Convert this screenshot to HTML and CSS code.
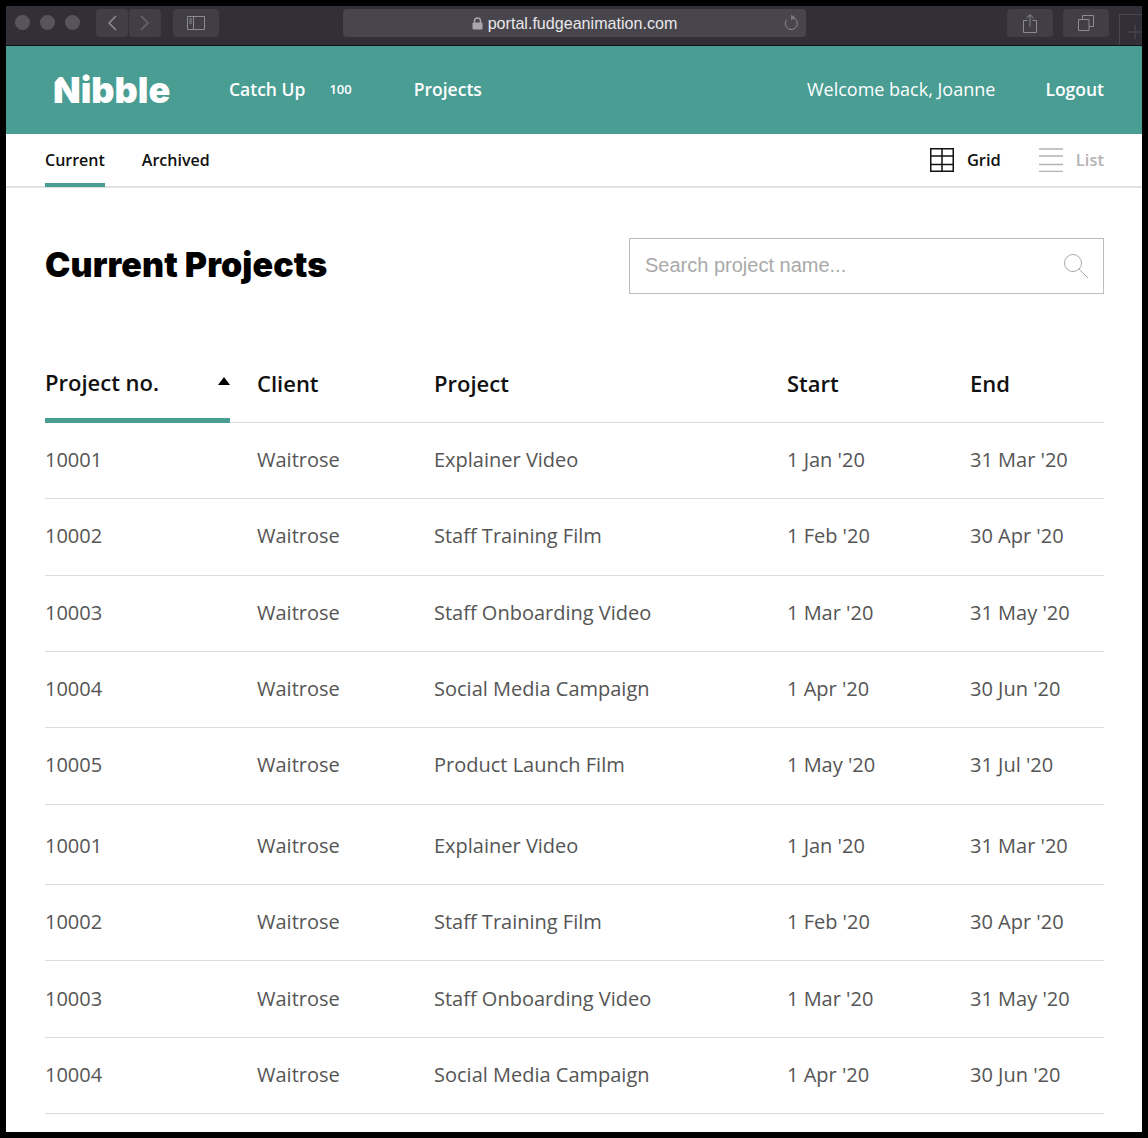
FILE: index.html
```html
<!DOCTYPE html>
<html lang="en">
<head>
    <meta charset="UTF-8">
    <meta name="viewport" content="width=device-width, initial-scale=1.0">
    <title>Nibble - Current Projects</title>
    <link rel="stylesheet" href="styles.css">
</head>
<body>
    <div class="window">
        <div class="browser-bar">
            <div class="traffic">
                <span class="dot"></span>
                <span class="dot"></span>
                <span class="dot"></span>
            </div>
            <div class="btn-group">
                <div class="bar-btn nav-btn">
                    <svg width="12" height="18" viewBox="0 0 12 18"><path d="M10 2 3 9l7 7" class="ico-line"/></svg>
                </div>
                <div class="bar-btn nav-btn">
                    <svg width="12" height="18" viewBox="0 0 12 18" class="dim"><path d="M2 2l7 7-7 7" class="ico-line"/></svg>
                </div>
            </div>
            <div class="bar-btn sidebar-btn">
                <svg width="18" height="14" viewBox="0 0 18 14"><path d="M.5.5h17v13H.5zM6.500.5v13M2 3h3M2 5h3M2 7h3" class="ico-line thin"/></svg>
            </div>
            <div class="address">
                <span class="address-text">
                    <svg width="11" height="13" viewBox="0 0 11 13"><path d="M2.500 6V4a3 3 0 0 1 6 0v2" class="lock-arc"/><rect x="0.500" y="5.500" width="10" height="7" rx="1" fill="#a9a7ad"/></svg>
                    portal.fudgeanimation.com
                </span>
                <svg class="reload" width="16" height="18" viewBox="0 0 16 18"><path d="M9.500 3.600A6 6 0 1 1 3.400 6" class="ico-line thin"/><path d="M8 .5l4.500 3L8 6.500z" fill="#77757b"/></svg>
            </div>
            <div class="bar-btn tool-btn">
                <svg width="14" height="19" viewBox="0 0 14 19"><path d="M4.500 6.500H.5v12h13v-12H9.500M7 12.500V1M3.500 4 7 .7 10.500 4" class="ico-line thin"/></svg>
            </div>
            <div class="bar-btn tool-btn">
                <svg width="16" height="16" viewBox="0 0 16 16"><path d="M.5 4.500h10.500v11H.5zM4.500 4.500V.5h11v11H11" class="ico-line thin"/></svg>
            </div>
            <div class="new-tab">
                <svg width="14" height="14" viewBox="0 0 14 14"><path d="M7 0v14M0 7h14" class="tab-plus"/></svg>
            </div>
        </div>

        <header class="site-header">
            <div class="logo">Nibble</div>
            <nav class="main-nav">
                <a class="main-link">Catch Up</a>
                <span class="count">100</span>
                <a class="main-link projects-link">Projects</a>
            </nav>
            <div class="user-nav">
                <span class="welcome">Welcome back, Joanne</span>
                <a class="main-link">Logout</a>
            </div>
        </header>

        <div class="sub-nav">
            <div class="tabs">
                <a class="tab active">Current</a>
                <a class="tab">Archived</a>
            </div>
            <div class="views">
                <div class="view">
                    <svg width="24" height="24" viewBox="0 0 24 24"><path d="M.75.75h22.500v22.500H.75zM.75 8h22.500M.75 16.500h22.500M12 .75v22.500" class="grid-ico"/></svg>
                    <span>Grid</span>
                </div>
                <div class="view off">
                    <svg width="24" height="24" viewBox="0 0 24 24"><path d="M0 1h24M0 8h24M0 16.500h24M0 23.500h24" class="list-ico"/></svg>
                    <span>List</span>
                </div>
            </div>
        </div>

        <main class="content">
            <div class="title-row">
                <h1>Current Projects</h1>
                <div class="search">
                    <span class="placeholder">Search project name...</span>
                    <svg width="26" height="26" viewBox="0 0 26 26"><circle cx="10" cy="10" r="8.500" class="search-ico"/><path d="M16 16l9 9" class="search-ico"/></svg>
                </div>
            </div>

            <div class="table">
                <div class="row head">
                    <div class="sort-cell"><span>Project no.</span><i class="arrow"></i></div>
                    <div>Client</div>
                    <div>Project</div>
                    <div>Start</div>
                    <div>End</div>
                </div>
                <div class="row"><div>10001</div><div>Waitrose</div><div>Explainer Video</div><div>1 Jan '20</div><div>31 Mar '20</div></div>
                <div class="row"><div>10002</div><div>Waitrose</div><div>Staff Training Film</div><div>1 Feb '20</div><div>30 Apr '20</div></div>
                <div class="row"><div>10003</div><div>Waitrose</div><div>Staff Onboarding Video</div><div>1 Mar '20</div><div>31 May '20</div></div>
                <div class="row"><div>10004</div><div>Waitrose</div><div>Social Media Campaign</div><div>1 Apr '20</div><div>30 Jun '20</div></div>
                <div class="row"><div>10005</div><div>Waitrose</div><div>Product Launch Film</div><div>1 May '20</div><div>31 Jul '20</div></div>
                <div class="row tall"><div>10001</div><div>Waitrose</div><div>Explainer Video</div><div>1 Jan '20</div><div>31 Mar '20</div></div>
                <div class="row"><div>10002</div><div>Waitrose</div><div>Staff Training Film</div><div>1 Feb '20</div><div>30 Apr '20</div></div>
                <div class="row"><div>10003</div><div>Waitrose</div><div>Staff Onboarding Video</div><div>1 Mar '20</div><div>31 May '20</div></div>
                <div class="row"><div>10004</div><div>Waitrose</div><div>Social Media Campaign</div><div>1 Apr '20</div><div>30 Jun '20</div></div>
            </div>
        </main>
    </div>
</body>
</html>
```

FILE: styles.css
```css
html, body {
    margin: 0;
    padding: 0;
    height: 100%;
    background: #000;
    overflow: hidden;
}
body {
    font-family: 'Open Sans', sans-serif;
    padding: 6px;
    box-sizing: border-box;
}
.window {
    height: 1126px;
    background: #fff;
    overflow: hidden;
}
.browser-bar {
    height: 36px;
    background: #322f38;
    border-bottom: 1px solid #121114;
    display: flex;
    align-items: flex-start;
    padding: 3px 0 0 9px;
}
.traffic {
    display: flex;
    gap: 10px;
    margin-top: 6px;
}
.dot {
    width: 15px;
    height: 15px;
    border-radius: 50%;
    background: #57555b;
}
.btn-group {
    display: flex;
    gap: 1px;
    margin-left: 16px;
}
.bar-btn {
    height: 28px;
    background: #413e46;
    border-radius: 4px;
    display: flex;
    align-items: center;
    justify-content: center;
}
.nav-btn {
    width: 32px;
}
.sidebar-btn {
    width: 46px;
    margin-left: 12px;
}
.ico-line {
    fill: none;
    stroke: #8c8a90;
    stroke-width: 1.6;
}
.ico-line.thin {
    stroke-width: 1;
}
.dim {
    opacity: 0.5;
}
.address {
    width: 463px;
    height: 28px;
    margin-left: 124px;
    background: #48454c;
    border-radius: 4px;
    display: flex;
    align-items: center;
    justify-content: center;
    position: relative;
}
.address-text {
    color: #e9e8ea;
    font-family: 'Liberation Sans', sans-serif;
    font-size: 16.100px;
    display: flex;
    align-items: center;
    gap: 5px;
}
.lock-arc {
    fill: none;
    stroke: #a9a7ad;
    stroke-width: 1.4;
}
.reload {
    position: absolute;
    right: 7px;
    top: 5px;
}
.tool-btn {
    width: 46px;
    margin-left: 10px;
}
.tool-btn:nth-of-type(5) {
    margin-left: 201px;
}
.new-tab {
    width: 23px;
    height: 31px;
    margin-left: 10px;
    margin-top: 5px;
    padding-top: 4px;
    box-sizing: border-box;
    border: 1px solid #4a484f;
    border-width: 1px 0 0 1px;
    display: flex;
    align-items: center;
    justify-content: flex-end;
}
.tab-plus {
    fill: none;
    stroke: #4f4d54;
    stroke-width: 1;
}

.site-header {
    height: 88px;
    background: #499d93;
    display: flex;
    align-items: center;
    padding: 0 38px 0 47px;
    color: #fff;
    box-sizing: border-box;
}
.logo {
    font-family: 'Inter', sans-serif;
    font-size: 36px;
    font-weight: 900;
    width: 176px;
    position: relative;
}
/* the bite out of the N */
.logo::before {
    content: '';
    position: absolute;
    left: 0;
    top: 8px;
    width: 7px;
    height: 8px;
    background: #499d93;
    clip-path: polygon(0 0, 100% 0, 0 100%);
}
.main-nav {
    display: flex;
    align-items: center;
    flex: 1;
    margin-bottom: 3px;
}
.main-link {
    font-size: 17.500px;
    font-weight: 600;
    color: #fff;
}
.count {
    font-size: 13px;
    font-weight: 600;
    margin-left: 24px;
}
.projects-link {
    margin-left: 62px;
}
.user-nav {
    display: flex;
    align-items: center;
    gap: 50px;
    margin-bottom: 3px;
}
.welcome {
    font-size: 18px;
}

.sub-nav {
    height: 54px;
    border-bottom: 2px solid #e2e2e2;
    box-sizing: border-box;
    display: flex;
    justify-content: space-between;
    padding: 0 38px 0 39px;
}
.tabs {
    display: flex;
    gap: 37px;
}
.tab {
    font-size: 16px;
    font-weight: 600;
    color: #111;
    height: 53px;
    box-sizing: border-box;
    padding-top: 15px;
}
.tab.active {
    border-bottom: 4px solid #499d93;
}
.views {
    display: flex;
    gap: 38px;
}
.view {
    display: flex;
    align-items: center;
    gap: 13px;
    font-size: 16.500px;
    font-weight: 600;
    color: #111;
    height: 52px;
}
.view span {
    margin-bottom: 2px;
}
.view.off {
    color: #b3b3b3;
}
.grid-ico {
    fill: none;
    stroke: #111;
    stroke-width: 1.500;
}
.list-ico {
    fill: none;
    stroke: #b3b3b3;
    stroke-width: 1.500;
}

.content {
    padding: 0 38px 0 39px;
}
.title-row {
    display: flex;
    justify-content: space-between;
    align-items: center;
    padding-top: 50px;
}
h1 {
    margin: 0 0 4px;
    font-family: 'Inter', sans-serif;
    font-size: 34px;
    font-weight: 900;
    letter-spacing: 0.1px;
    color: #000;
}
.search {
    width: 475px;
    height: 56px;
    border: 1px solid #bcbcbc;
    box-sizing: border-box;
    display: flex;
    align-items: center;
    justify-content: space-between;
    padding: 0 14px 0 15px;
    font-family: 'Liberation Sans', sans-serif;
    font-size: 20px;
    color: #a9a9a9;
}
.placeholder {
    margin-bottom: 2px;
}
.search-ico {
    fill: none;
    stroke: #aaa;
    stroke-width: 1;
}

.table {
    margin-top: 52px;
}
.row {
    display: grid;
    grid-template-columns: 212px 177px 353px 183px 135px;
    height: 76.330px;
    box-sizing: border-box;
    align-items: center;
    border-bottom: 1px solid #dcdcdc;
    padding-bottom: 2px;
    font-size: 20px;
    color: #555;
}
.row.tall {
    height: 80.500px;
    padding: 3px 0 0;
}
.row.head {
    height: 77px;
    grid-template-rows: 74px;
    font-size: 22px;
    font-weight: 600;
    color: #111;
}
.sort-cell {
    width: 185px;
    height: 77px;
    align-self: start;
    box-sizing: border-box;
    border-bottom: 5px solid #499d93;
    display: flex;
    align-items: center;
    justify-content: space-between;
}
.arrow {
    width: 0;
    height: 0;
    margin: 0 0.500px 2px 0;
    border-left: 6.500px solid transparent;
    border-right: 6.500px solid transparent;
    border-bottom: 8px solid #000;
}
```
